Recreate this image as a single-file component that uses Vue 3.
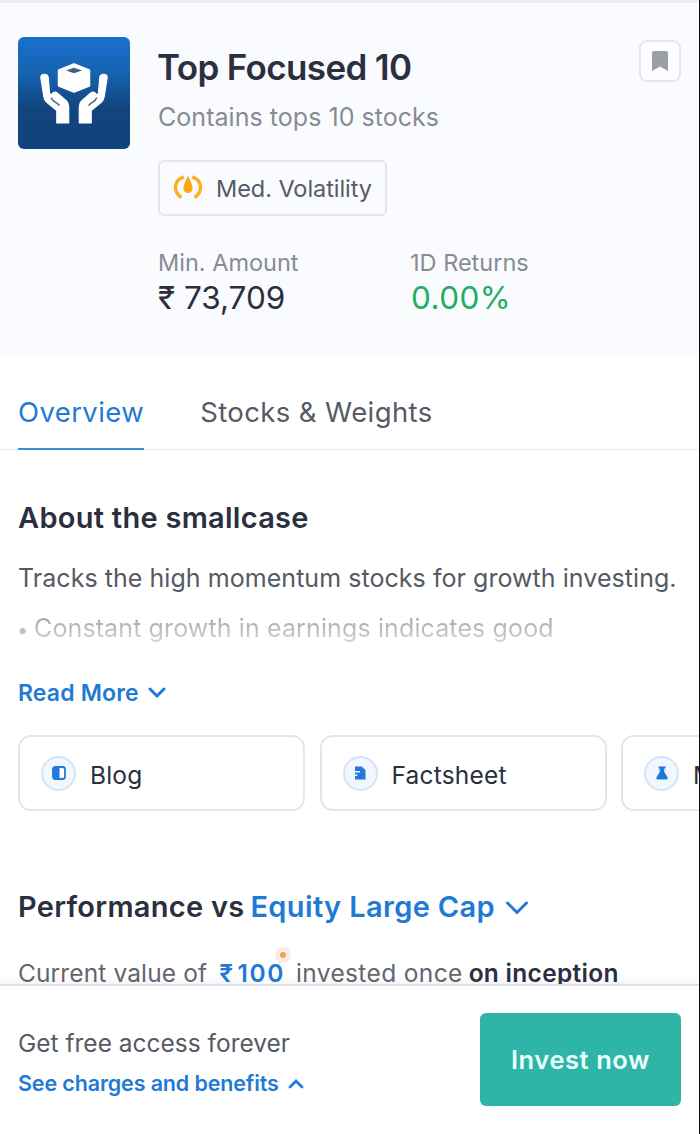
<template>
  <div class="screen">
    <header class="hero">
      <div class="logo">
        <svg viewBox="0 0 112 112" width="112" height="112">
          <g fill="#fff" stroke="#fff" stroke-linejoin="round">
            <path d="M56 27.5 71 33.5V48.5L56 54.5 41 48.5V33.5Z" stroke-width="2.5" />
            <path
              d="M22.8 40.5C22.8 36.4 29.6 36 30.2 40.3L31.6 56.5 39.5 63.5 34.5 59.5C32.5 56.5 36.5 53.5 39.5 56.2L48.5 64Q50.7 66.5 50.7 70V86H38.8V73.5L28.5 65Q26.2 63 25.8 59.5Z"
              stroke-width="1.2"
            />
            <path
              d="M89.2 40.5C89.2 36.4 82.4 36 81.8 40.3L80.4 56.5 72.5 63.5 77.5 59.5C79.5 56.5 75.5 53.5 72.5 56.2L63.5 64Q61.3 66.5 61.3 70V86H73.2V73.5L83.5 65Q85.8 63 86.2 59.5Z"
              stroke-width="1.2"
            />
          </g>
          <path d="M48 33.5 56 30.7 64 33.5 56 36.3Z" fill="#3a6284" />
          <path d="M33.3 60.5C34 64 38.5 65.5 41.5 68.5" fill="none" stroke="#4a6f93" stroke-width="1.5" />
          <path d="M78.7 60.5C78 64 73.5 65.5 70.5 68.5" fill="none" stroke="#4a6f93" stroke-width="1.5" />
        </svg>
      </div>

      <div class="info">
        <h1>Top Focused 10</h1>
        <p class="subtitle">Contains tops 10 stocks</p>
        <div class="badge">
          <svg viewBox="0 0 30 26" width="30" height="26">
            <path
              d="M8.5 22.5C1.5 18 .5 9.5 6 4.5C7.5 3.2 9 2.4 10.8 1.9M21.5 22.5C28.5 18 29.5 9.5 24 4.5C22.5 3.2 21 2.4 19.2 1.9"
              fill="none"
              stroke="#fbb020"
              stroke-width="3.4"
            />
            <path d="M15 .5C16.5 4.5 19.6 9.5 19.6 13.5A4.6 4.6 0 0 1 10.4 13.5C10.4 9.5 13.5 4.5 15 .5Z" fill="#f8a90f" />
          </svg>
          <span>Med. Volatility</span>
        </div>
        <div class="stats">
          <div v-for="stat in stats" :key="stat.label" class="stat">
            <div class="stat-label">{{ stat.label }}</div>
            <div class="stat-value" :class="{ positive: stat.positive }">{{ stat.value }}</div>
          </div>
        </div>
      </div>

      <button class="bookmark" aria-label="Save">
        <svg viewBox="0 0 16 20" width="16" height="20">
          <path d="M1.5 0H14.5Q16 0 16 1.5V20L8 15.5 0 20V1.5Q0 0 1.5 0Z" fill="#9a9fa8" />
        </svg>
      </button>
    </header>

    <nav class="tabs">
      <a
        v-for="tab in tabs"
        :key="tab"
        class="tab"
        :class="{ active: tab === activeTab }"
        @click="activeTab = tab"
      >{{ tab }}</a>
    </nav>

    <section class="about">
      <h2>About the smallcase</h2>
      <p class="about-text">Tracks the high momentum stocks for growth investing.</p>
      <p class="about-text faded"><span class="bullet">•</span>Constant growth in earnings indicates good</p>
      <a class="read-more">
        Read More
        <svg viewBox="0 0 18 12" width="18" height="12">
          <path d="M2 2 9 9 16 2" fill="none" stroke="#1f7ad4" stroke-width="3" stroke-linecap="round" />
        </svg>
      </a>
    </section>

    <div class="links">
      <div v-for="link in links" :key="link.icon" class="link-card">
        <span class="link-icon">
          <svg v-if="link.icon === 'blog'" viewBox="0 0 14 14" width="14" height="14">
            <rect x="1" y="1" width="12" height="12" rx="2.5" fill="#fff" stroke="#1f7ae0" stroke-width="1.8" />
            <path d="M3 .5H7.5V13.5H3A2.5 2.5 0 0 1 .5 11V3A2.5 2.5 0 0 1 3 .5Z" fill="#1f7ae0" />
          </svg>
          <svg v-else-if="link.icon === 'factsheet'" viewBox="0 0 14 14" width="14" height="14">
            <path d="M2 .5H8.5L12.5 4V13.5H2V10H4.5V8.5H2V6.5H7V5H2Z" fill="#1f7ae0" />
          </svg>
          <svg v-else viewBox="0 0 14 14" width="14" height="14">
            <path d="M3.5 .5H10.5V2.5H9.3V6L12.5 11.3Q13.2 13.5 11 13.5H3Q.8 13.5 1.5 11.3L4.7 6V2.5H3.5Z" fill="#1f7ae0" />
          </svg>
        </span>
        <span class="link-label">{{ link.label }}</span>
      </div>
    </div>

    <section class="performance">
      <h2>
        <span>Performance vs</span>
        <a class="benchmark">Equity Large Cap</a>
        <svg viewBox="0 0 24 16" width="24" height="16">
          <path d="M2.5 4 12 13.5 21.5 4" fill="none" stroke="#1f7ad4" stroke-width="3" stroke-linecap="round" />
        </svg>
      </h2>
      <p class="current">
        <span>Current value of</span>
        <a class="amount"><span class="rupee">₹</span>100<i class="dot"></i></a>
        <span class="invested">invested once</span>
        <strong>on inception</strong>
      </p>
    </section>

    <footer class="bottom-bar">
      <div>
        <div class="access">Get free access forever</div>
        <a class="charges">
          See charges and benefits
          <svg viewBox="0 0 16 10" width="16" height="10">
            <path d="M2 8 8 2 14 8" fill="none" stroke="#1f7ad4" stroke-width="2.8" stroke-linecap="round" />
          </svg>
        </a>
      </div>
      <button class="invest">Invest now</button>
    </footer>
  </div>
</template>

<script setup>
import { ref } from 'vue'

const tabs = ['Overview', 'Stocks & Weights']
const activeTab = ref('Overview')

const stats = [
  { label: 'Min. Amount', value: '₹ 73,709', positive: false },
  { label: '1D Returns', value: '0.00%', positive: true }
]

const links = [
  { label: 'Blog', icon: 'blog' },
  { label: 'Factsheet', icon: 'factsheet' },
  { label: 'Methodology', icon: 'method' }
]
</script>

<style>
body {
  margin: 0;
  background: #fff;
}
</style>

<style scoped>
.screen {
  position: relative;
  box-sizing: border-box;
  width: 700px;
  height: 1134px;
  overflow: hidden;
  border-right: 1px solid #0c0c0c;
  background: #fff;
  color: #2b2f3e;
  font-family: Inter, "Liberation Sans", sans-serif;
}

h1,
h2,
p {
  margin: 0;
}

h1,
h2,
.read-more,
.charges,
.amount,
strong {
  font-weight: 600;
}

svg {
  display: block;
  flex: none;
}

.hero {
  display: flex;
  box-sizing: border-box;
  height: 358px;
  padding: 34px 18px 0;
  border-top: 3px solid #ececef;
  background: #fafbfe;
}

.logo {
  flex: none;
  width: 112px;
  height: 112px;
  margin-right: 28px;
  overflow: hidden;
  border-radius: 6px;
  background: linear-gradient(#1a70cf 0%, #1663b0 32%, #12447e 65%, #12427c 100%);
}

.info {
  flex: 1;
  min-width: 0;
}

h1 {
  margin-left: -1px;
  font-size: 35px;
  line-height: 60px;
  letter-spacing: -0.64px;
}

.subtitle {
  color: #888b93;
  font-size: 25px;
  line-height: 40px;
  letter-spacing: 0.04px;
}

.badge {
  display: flex;
  align-items: center;
  box-sizing: border-box;
  width: 229px;
  height: 56px;
  margin-top: 23px;
  padding-left: 13px;
  border: 2px solid #e4e4eb;
  border-radius: 6px;
  color: #565a64;
  font-size: 23.5px;
  letter-spacing: -0.06px;
}

.badge span {
  margin-left: 13px;
}

.stats {
  display: flex;
  margin-top: 28px;
}

.stat {
  flex: none;
  width: 252px;
}

.stat-label {
  color: #888b93;
  font-size: 23.5px;
  line-height: 37px;
}

.stat-value {
  font-size: 31.5px;
  line-height: 34px;
}

.stat-value.positive {
  padding-left: 1px;
  color: #1faf5e;
  letter-spacing: 0.4px;
}

.bookmark {
  display: flex;
  flex: none;
  align-items: center;
  justify-content: center;
  box-sizing: border-box;
  width: 42px;
  height: 42px;
  margin-top: 3px;
  padding: 0;
  border: 2px solid #e4e5ea;
  border-radius: 8px;
  background: #fdfdff;
}

.tabs {
  display: flex;
  gap: 56px;
  box-sizing: border-box;
  height: 92px;
  padding: 38px 18px 0;
  box-shadow: inset 0 -1px #e9eaee;
}

.tab {
  padding-bottom: 20px;
  border-bottom: 2px solid transparent;
  color: #565a64;
  font-size: 27.5px;
  line-height: 32px;
  letter-spacing: 0.4px;
}

.tab.active {
  border-color: #3a8ed8;
  color: #1f7ad4;
}

.about {
  padding: 48px 18px 0;
}

h2 {
  font-size: 29px;
  line-height: 40px;
  letter-spacing: 0.28px;
}

.about-text {
  color: #565a64;
  font-size: 25px;
  line-height: 50px;
  letter-spacing: 0.05px;
  white-space: nowrap;
}

h2 + .about-text {
  margin-top: 15px;
}

.faded {
  background: linear-gradient(#a6a8ae 30%, #d6d7da 80%);
  background-clip: text;
  color: transparent;
  letter-spacing: 0.12px;
}

.bullet {
  display: inline-block;
  width: 17px;
  margin-left: -1px;
  font-size: 20px;
  line-height: 1;
}

.read-more {
  display: flex;
  align-items: center;
  gap: 9px;
  margin-top: 25px;
  color: #1f7ad4;
  font-size: 23px;
  line-height: 30px;
  letter-spacing: 0.16px;
}

.links {
  display: flex;
  gap: 14.5px;
  margin-top: 27px;
  padding-left: 18px;
}

.link-card {
  display: flex;
  flex: none;
  align-items: center;
  box-sizing: border-box;
  width: 287px;
  height: 76px;
  padding-left: 21px;
  border: 2px solid #e6e5eb;
  border-radius: 13px;
}

.link-icon {
  display: flex;
  align-items: center;
  justify-content: center;
  box-sizing: border-box;
  width: 35px;
  height: 35px;
  border: 2px solid #d5e2f7;
  border-radius: 50%;
  background: #f2f7fe;
}

.link-label {
  margin-left: 14px;
  padding-top: 3px;
  font-size: 24.5px;
  line-height: 30px;
  letter-spacing: 0.2px;
}

.performance {
  padding: 76px 18px 0;
}

.performance h2 {
  display: flex;
  align-items: center;
  white-space: nowrap;
}

.benchmark {
  margin: 0 10px 0 6px;
  color: #1f7ad4;
  letter-spacing: 0.36px;
}

.current {
  display: flex;
  margin-top: 31px;
  color: #63666f;
  font-size: 24.5px;
  line-height: 31px;
  letter-spacing: 0.12px;
  white-space: nowrap;
}

.amount {
  position: relative;
  margin-left: 12px;
  color: #1f7ad4;
  letter-spacing: 1.6px;
}

.rupee {
  margin-right: 3px;
}

.dot {
  position: absolute;
  top: -11px;
  right: -6px;
  box-sizing: border-box;
  width: 16px;
  height: 16px;
  border: 5px solid #fdebe6;
  border-radius: 50%;
  background: #eda458;
}

.invested {
  margin-left: 11px;
  letter-spacing: 0.36px;
}

strong {
  margin-left: 6px;
  color: #2b2f3e;
  letter-spacing: 0.3px;
}

.bottom-bar {
  position: absolute;
  right: 0;
  bottom: 0;
  left: 0;
  display: flex;
  justify-content: space-between;
  box-sizing: border-box;
  height: 150px;
  padding: 27px 18px 0;
  border-top: 2px solid #e0dfe6;
  background: #fff;
  box-shadow: 0 -3px 10px rgba(60, 65, 110, 0.07);
}

.access {
  margin-top: 15px;
  color: #565a64;
  font-size: 24.5px;
  line-height: 30px;
}

.charges {
  display: flex;
  align-items: center;
  gap: 9px;
  margin-top: 10px;
  color: #1f7ad4;
  font-size: 21.5px;
  line-height: 31px;
  letter-spacing: -0.14px;
}

.invest {
  width: 201px;
  height: 93px;
  padding: 0;
  border: 0;
  border-radius: 6px;
  background: #2fb5a8;
  color: #eafffb;
  font-family: inherit;
  font-size: 25.5px;
  font-weight: 600;
  letter-spacing: 0.56px;
}
</style>
